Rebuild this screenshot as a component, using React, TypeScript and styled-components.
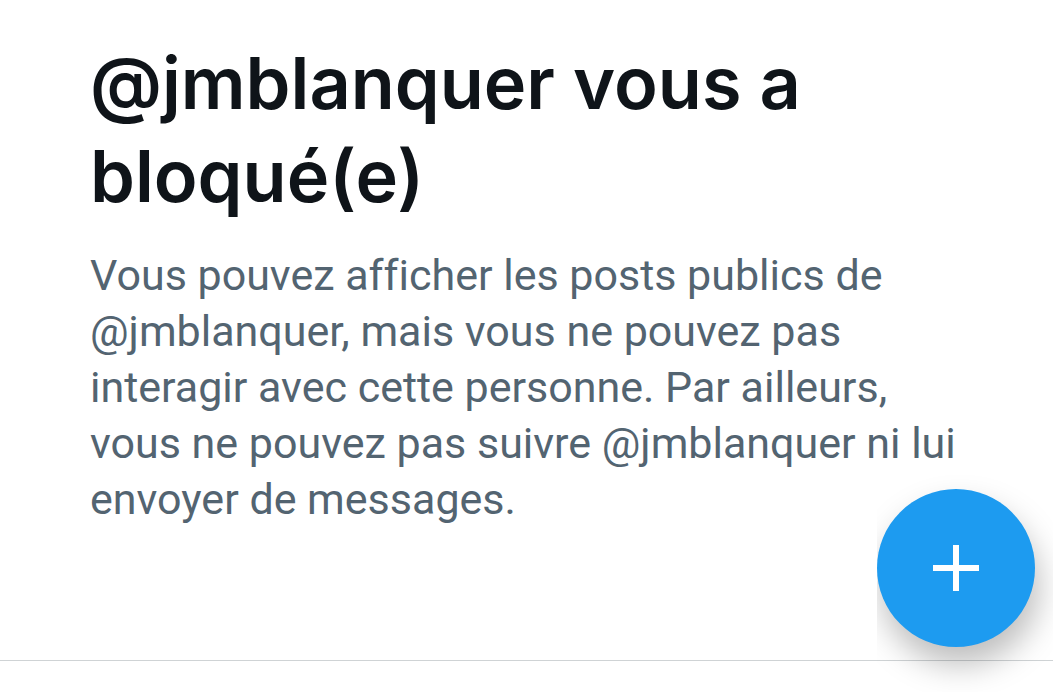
import React from "react";
import styled, { createGlobalStyle } from "styled-components";

const GlobalStyle = createGlobalStyle`
  * { box-sizing: border-box; }
  body { margin: 0; background: #ffffff; }
`;

const Page = styled.main`
  min-height: 100vh;
  padding-bottom: 31px;
  display: flex;
  flex-direction: column;
  font-family: Roboto, "Open Sans", sans-serif;
  font-variant-ligatures: none;
`;

const Notice = styled.section`
  flex: 1;
  padding: 36px 90px;
  border-bottom: 1px solid #cfd3d5;
`;

const Title = styled.h1`
  margin: 0;
  color: #0f1419;
  font-family: Inter, "Liberation Sans", sans-serif;
  font-size: 72px;
  line-height: 93px;
  font-weight: 600;
`;

const Message = styled.p`
  margin: 25px 0 0;
  color: #536471;
  font-size: 43px;
  line-height: 56px;
`;

const ComposeButton = styled.button`
  position: fixed;
  right: 18px;
  bottom: 45px;
  display: grid;
  place-items: center;
  width: 158px;
  height: 158px;
  padding: 0;
  border: 0;
  border-radius: 50%;
  background: #1d9bf0;
  color: #ffffff;
  box-shadow: 4px 18px 32px rgba(0, 0, 0, 0.26);
  clip-path: inset(-60px -60px -60px 0);
`;

export default function App() {
  return (
    <Page>
      <GlobalStyle />
      <Notice>
        <Title>@jmblanquer vous a bloqué(e)</Title>
        <Message>
          Vous pouvez afficher les posts publics de @jmblanquer, mais vous ne
          pouvez pas interagir avec cette personne. Par ailleurs, vous ne pouvez
          pas suivre @jmblanquer ni lui envoyer de messages.
        </Message>
      </Notice>
      <ComposeButton type="button" aria-label="Nouveau post">
        <svg width="46" height="46" viewBox="0 0 46 46" aria-hidden="true">
          <path d="M23 0V46M0 23H46" stroke="currentColor" strokeWidth="6" />
        </svg>
      </ComposeButton>
    </Page>
  );
}
